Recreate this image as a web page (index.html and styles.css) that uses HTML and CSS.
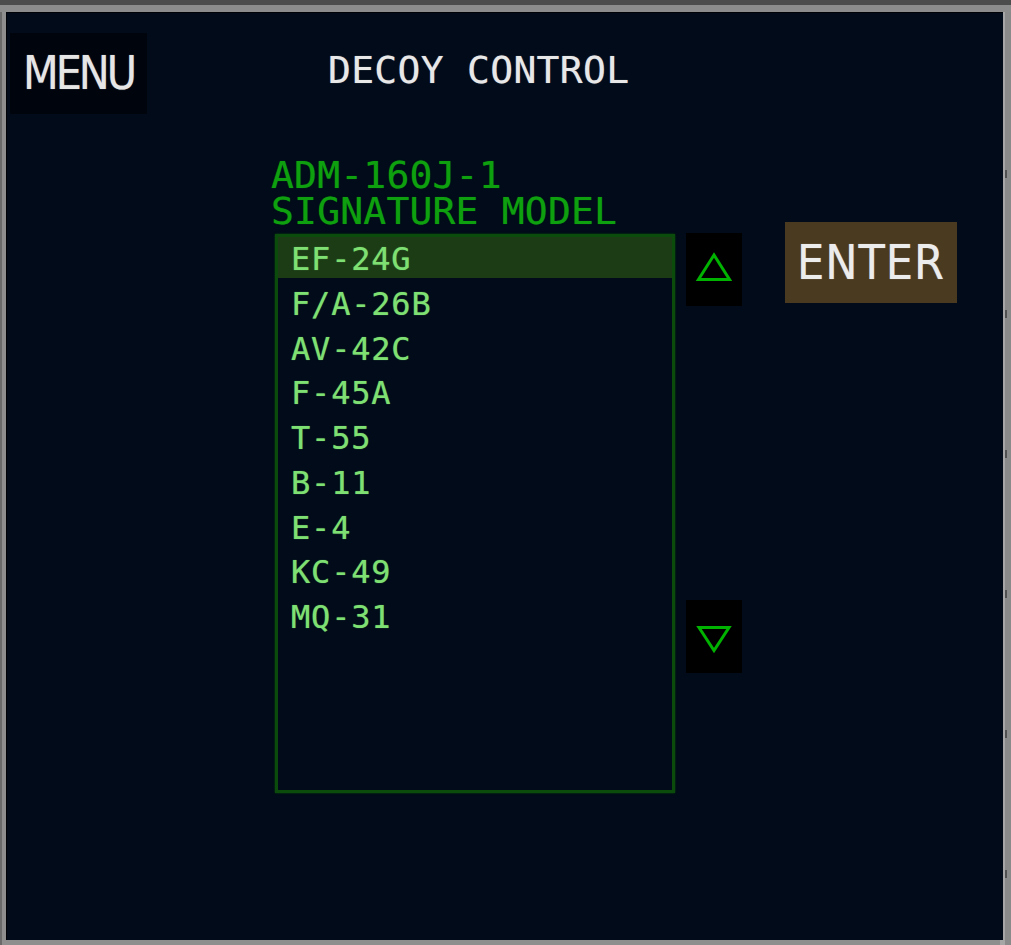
FILE: index.html
```html
<!DOCTYPE html>
<html>
<head>
<meta charset="utf-8">
<link rel="stylesheet" href="styles.css">
</head>
<body>
<div class="frame">
  <div class="screen">
    <div class="header">
      <div class="menu">MENU</div>
      <div class="title">DECOY CONTROL</div>
    </div>
    <div class="main">
      <div class="label">
        <div class="label-line">ADM-160J-1</div>
        <div class="label-line">SIGNATURE MODEL</div>
      </div>
      <div class="row">
        <div class="list">
          <div class="item selected">EF-24G</div>
          <div class="item">F/A-26B</div>
          <div class="item">AV-42C</div>
          <div class="item">F-45A</div>
          <div class="item">T-55</div>
          <div class="item">B-11</div>
          <div class="item">E-4</div>
          <div class="item">KC-49</div>
          <div class="item">MQ-31</div>
        </div>
        <div class="arrows">
          <div class="arrow up">
            <svg width="56" height="73" viewBox="0 0 56 73"><polygon points="28,22 12.5,46.5 43.5,46.5" fill="none" stroke="#00b300" stroke-width="3"/></svg>
          </div>
          <div class="arrow down">
            <svg width="56" height="73" viewBox="0 0 56 73"><polygon points="13,27.5 43,27.5 28,50.5" fill="none" stroke="#00b300" stroke-width="3"/></svg>
          </div>
        </div>
        <div class="enter">ENTER</div>
      </div>
    </div>
  </div>
</div>
</body>
</html>
```
FILE: styles.css
```css
html, body {
  margin: 0;
  padding: 0;
}
body {
  width: 1011px;
  height: 945px;
  overflow: hidden;
  background: #8a8a8a;
}
.frame {
  height: 945px;
  box-sizing: border-box;
  padding: 12px 8px 5px 6px;
  background:
    linear-gradient(#4c4c4c 0 5px, #8c8c8c 5px 12px, transparent 12px),
    repeating-linear-gradient(transparent 0 130px, #505050 130px 138px, transparent 138px 140px) 1005px 40px / 2px 900px no-repeat,
    linear-gradient(90deg, #6a6a6a 0 2px, #8e8e8e 2px 1000px, #a6a6a6 1000px 1005px, #8a8a8a 1005px);
}
.screen {
  height: 100%;
  background: #010b19;
  box-sizing: border-box;
  padding: 21px 0 0 4px;
  box-shadow: inset 1px 1px 0 #000208;
}
.header {
  display: flex;
  align-items: flex-start;
}
.menu {
  width: 137px;
  height: 81px;
  background: #00050d;
  color: #e6e6e6;
  font-family: "DejaVu Sans Condensed", "DejaVu Sans", sans-serif;
  font-size: 46px;
  letter-spacing: -3px;
  line-height: 81px;
  box-sizing: border-box;
  padding-left: 13px;
  text-shadow: 0 0 1px rgba(230, 230, 230, 0.6);
}
.title {
  margin-left: 181px;
  margin-top: 18px;
  color: #e8e8e8;
  font-family: "DejaVu Sans Mono", monospace;
  font-size: 38px;
  line-height: 38px;
  letter-spacing: 0.3px;
  text-shadow: 0 0 1px rgba(230, 230, 230, 0.6);
}
.main {
  padding-left: 261px;
  margin-top: 43px;
}
.label {
  color: #0ea00e;
  font-family: "DejaVu Sans Mono", monospace;
  font-size: 38px;
  letter-spacing: 0.2px;
  text-shadow: 0 0 1px rgba(14, 160, 14, 0.7);
}
.label-line {
  height: 36px;
  line-height: 36px;
}
.row {
  display: flex;
  align-items: flex-start;
  margin-top: 5px;
}
.list {
  margin-left: 4px;
  width: 400px;
  height: 559px;
  box-sizing: border-box;
  border: 3px solid #0b4c0c;
  box-shadow: 0 0 2px #0a4a0c;
}
.item {
  height: 44.75px;
  line-height: 44.75px;
  font-family: "DejaVu Sans Mono", monospace;
  font-size: 32px;
  color: #7ee072;
  padding-left: 13px;
  letter-spacing: 0.8px;
  text-shadow: 0 0 1px rgba(126, 224, 114, 0.7);
}
.item.selected {
  background: #1c3c16;
  height: 41px;
  margin-bottom: 3.75px;
}
.arrows {
  display: flex;
  flex-direction: column;
  margin-left: 11px;
  margin-top: -1px;
}
.arrow {
  width: 56px;
  height: 73px;
  background: #000000;
}
.arrow svg {
  display: block;
}
.arrow.down {
  margin-top: 294px;
}
.enter {
  margin-left: 43px;
  margin-top: -12px;
  width: 172px;
  height: 81px;
  background: #4a3a1f;
  color: #ececec;
  font-family: "DejaVu Sans Condensed", "DejaVu Sans", sans-serif;
  font-size: 48px;
  line-height: 81px;
  text-align: center;
  letter-spacing: 1px;
  text-shadow: 0 0 1px rgba(236, 236, 236, 0.6);
}
```
